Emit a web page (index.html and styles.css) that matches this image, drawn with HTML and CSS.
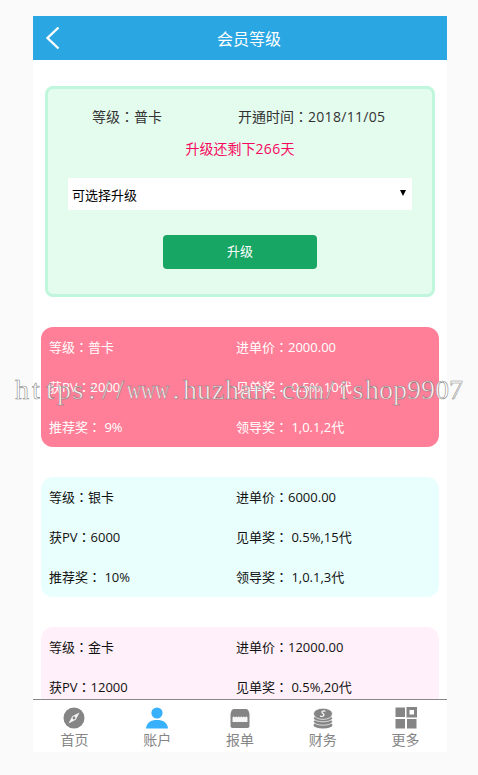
FILE: index.html
```html
<!DOCTYPE html>
<html lang="zh-Hant">
<head>
<meta charset="utf-8">
<title>会员等级</title>
<link rel="stylesheet" href="styles.css">
</head>
<body>
<div class="phone">
  <header class="topbar">
    <svg class="back" width="16" height="24" viewBox="0 0 16 24"><path d="M13.5 1.5 L2.5 12 L13.5 22.5" fill="none" stroke="#fff" stroke-width="2.4"/></svg>
    <h1>会员等级</h1>
  </header>
  <main class="content">
    <section class="status">
      <div class="status-row"><span>等级：普卡</span><span>开通时间：<span class="date">2018/11/05</span></span></div>
      <p class="remain">升级还剩下<span class="days">266</span>天</p>
      <div class="select"><span>可选择升级</span><i class="caret"></i></div>
      <button class="upgrade">升级</button>
    </section>
    <section class="rank pink">
      <span>等级：普卡</span><span>进单价：2000.00</span>
      <span>获PV：2000</span><span>见单奖： 0.5%,10代</span>
      <span>推荐奖： 9%</span><span>领导奖： 1,0.1,2代</span>
    </section>
    <section class="rank cyan">
      <span>等级：银卡</span><span>进单价：6000.00</span>
      <span>获PV：6000</span><span>见单奖： 0.5%,15代</span>
      <span>推荐奖： 10%</span><span>领导奖： 1,0.1,3代</span>
    </section>
    <section class="rank lilac">
      <span>等级：金卡</span><span>进单价：12000.00</span>
      <span>获PV：12000</span><span>见单奖： 0.5%,20代</span>
    </section>
  </main>
  <nav class="tabs">
    <a class="tab">
      <svg width="22" height="22" viewBox="0 0 22 22"><circle cx="11" cy="11" r="10.5" fill="#858585"/><path d="M16.5 5.5 L12.8 12.8 L5.5 16.5 L9.2 9.2Z" fill="#f4f4f4"/><circle cx="11" cy="11" r="1.4" fill="#858585"/></svg>
      <span>首页</span>
    </a>
    <a class="tab active">
      <svg width="22" height="22" viewBox="0 0 22 22"><circle cx="11" cy="6" r="5.6" fill="#38b0fb"/><path d="M0 21.5 C0.5 15.5 5 13 11 13 C17 13 21.5 15.5 22 21.5Z" fill="#38b0fb"/></svg>
      <span>账户</span>
    </a>
    <a class="tab">
      <svg width="22" height="22" viewBox="0 0 22 22"><path d="M5 2 H17 C19 2 20 4 20.5 7 V19 Q20.5 21 18.5 21 H3.5 Q1.5 21 1.5 19 V7 C2 4 3 2 5 2Z" fill="#858585"/><path d="M3.5 10.5 Q4.75 8.5 6 10.5 Q7.25 8.5 8.5 10.5 Q9.75 8.5 11 10.5 Q12.25 8.5 13.5 10.5 Q14.75 8.5 16 10.5 Q17.25 8.5 18.5 10.5 V15 H3.5Z" fill="#f6f6f6"/></svg>
      <span>报单</span>
    </a>
    <a class="tab">
      <svg width="22" height="22" viewBox="0 0 22 22"><ellipse cx="11" cy="18" rx="9.5" ry="3.6" fill="#858585"/><ellipse cx="11" cy="14.6" rx="9.5" ry="3.6" fill="#858585" stroke="#fff" stroke-width=".7"/><ellipse cx="11" cy="11.2" rx="9.5" ry="3.6" fill="#858585" stroke="#fff" stroke-width=".7"/><ellipse cx="11" cy="6.8" rx="9.5" ry="5.6" fill="#858585" stroke="#fff" stroke-width=".7"/><path d="M13.5 4.2 C11 3.4 9 4.4 10.4 6 C11.6 7.2 13 7.6 11.2 9 C10 9.6 9 9.4 8 9" fill="none" stroke="#fff" stroke-width="1.2"/></svg>
      <span>财务</span>
    </a>
    <a class="tab">
      <svg width="22" height="22" viewBox="0 0 22 22"><rect x="0.5" y="0.5" width="9.5" height="9.5" fill="#858585"/><rect x="13" y="1.5" width="7.5" height="7.5" fill="#fff" stroke="#858585" stroke-width="3"/><rect x="0.5" y="12" width="9.5" height="9.5" fill="#858585"/><rect x="12" y="12" width="9.5" height="9.5" fill="#858585"/></svg>
      <span>更多</span>
    </a>
  </nav>
</div>
<div class="watermark"><span>h</span><span>t</span><span>t</span><span>p</span><span>s</span><span>:</span><span>/</span><span>/</span><span class="wide">w</span><span class="wide">w</span><span class="wide">w</span><span>.</span><span>h</span><span>u</span><span>z</span><span>h</span><span>a</span><span>n</span><span>.</span><span>c</span><span>o</span><span class="wide">m</span><span>/</span><span>i</span><span>s</span><span>h</span><span>o</span><span>p</span><span>9</span><span>9</span><span>0</span><span>7</span></div>
</body>
</html>
```
FILE: styles.css
```css
* { box-sizing: border-box; }
html, body { height: 100%; }
body {
  margin: 0;
  padding-top: 16px;
  background: #fafafa;
  overflow: hidden;
  font-family: "Open Sans", "Noto Sans CJK TC", sans-serif;
  font-size: 14px;
}
.phone {
  position: relative;
  width: 414px;
  height: 736px;
  margin-left: 33px;
  background: #fff;
  overflow: hidden;
}
.topbar {
  position: relative;
  display: flex;
  align-items: center;
  justify-content: center;
  height: 44px;
  padding-left: 18px;
  background: #2aa6e3;
}
.topbar h1 { margin: 0; font-size: 16px; font-weight: 400; color: #fff; }
.back { position: absolute; left: 12px; top: 10px; }
.content { padding: 26px 8px 0; }
.status {
  display: flex;
  flex-direction: column;
  align-items: center;
  height: 211px;
  margin: 0 4px 30px;
  padding-top: 18px;
  background: #e3fcee;
  border: 3px solid #c0f6dc;
  border-radius: 8px;
  color: #333;
}
.status-row {
  display: grid;
  grid-template-columns: 146px auto;
  width: 100%;
  padding-left: 44px;
  line-height: 20px;
}
.date { letter-spacing: .3px; }
.remain { margin: 12px 0 0; line-height: 20px; color: #f8065f; }
.days { letter-spacing: .3px; }
.select {
  display: flex;
  align-items: center;
  justify-content: space-between;
  width: 344px;
  height: 32px;
  margin-top: 19px;
  padding: 0 6px 0 4px;
  background: #fff;
  color: #000;
  font-size: 13px;
}
.caret {
  width: 0; height: 0;
  margin-bottom: 2px;
  border-left: 3px solid transparent;
  border-right: 3px solid transparent;
  border-top: 6px solid #000;
}
.upgrade {
  width: 154px;
  height: 34px;
  margin-top: 25px;
  padding: 0 0 3px;
  border: 0;
  border-radius: 4px;
  background: #18a665;
  color: #fff;
  font: inherit;
  font-size: 13px;
}
.rank {
  display: grid;
  grid-template-columns: 187px 1fr;
  grid-auto-rows: 40px;
  align-items: center;
  height: 120px;
  margin-bottom: 30px;
  padding-left: 8px;
  border-radius: 12px;
  font-size: 13px;
  line-height: 18px;
}
.pink { background: #ff7f98; color: #fff; }
.cyan { background: #e9fffd; color: #111; }
.lilac { background: #fff0f9; color: #111; }
.tabs {
  position: absolute;
  left: 0; right: 0; bottom: 0;
  display: grid;
  grid-template-columns: repeat(5, 1fr);
  height: 53px;
  border-top: 1px solid #888;
  background: #fff;
}
.tab {
  display: flex;
  flex-direction: column;
  align-items: center;
  padding-top: 7px;
  color: #858585;
  font-size: 14px;
  line-height: 20px;
}
.tab svg { display: block; margin-bottom: 1px; }
.watermark {
  position: absolute;
  left: 15px;
  top: 372px;
  display: grid;
  grid-template-columns: repeat(32, 14px);
  justify-items: center;
  font-family: "Liberation Serif", serif;
  font-size: 28px;
  line-height: 36px;
  color: rgba(255,255,255,.85);
  -webkit-text-stroke: 0.6px rgba(110,110,110,.8);
}
.watermark .wide { transform: scaleX(.72); }
```
